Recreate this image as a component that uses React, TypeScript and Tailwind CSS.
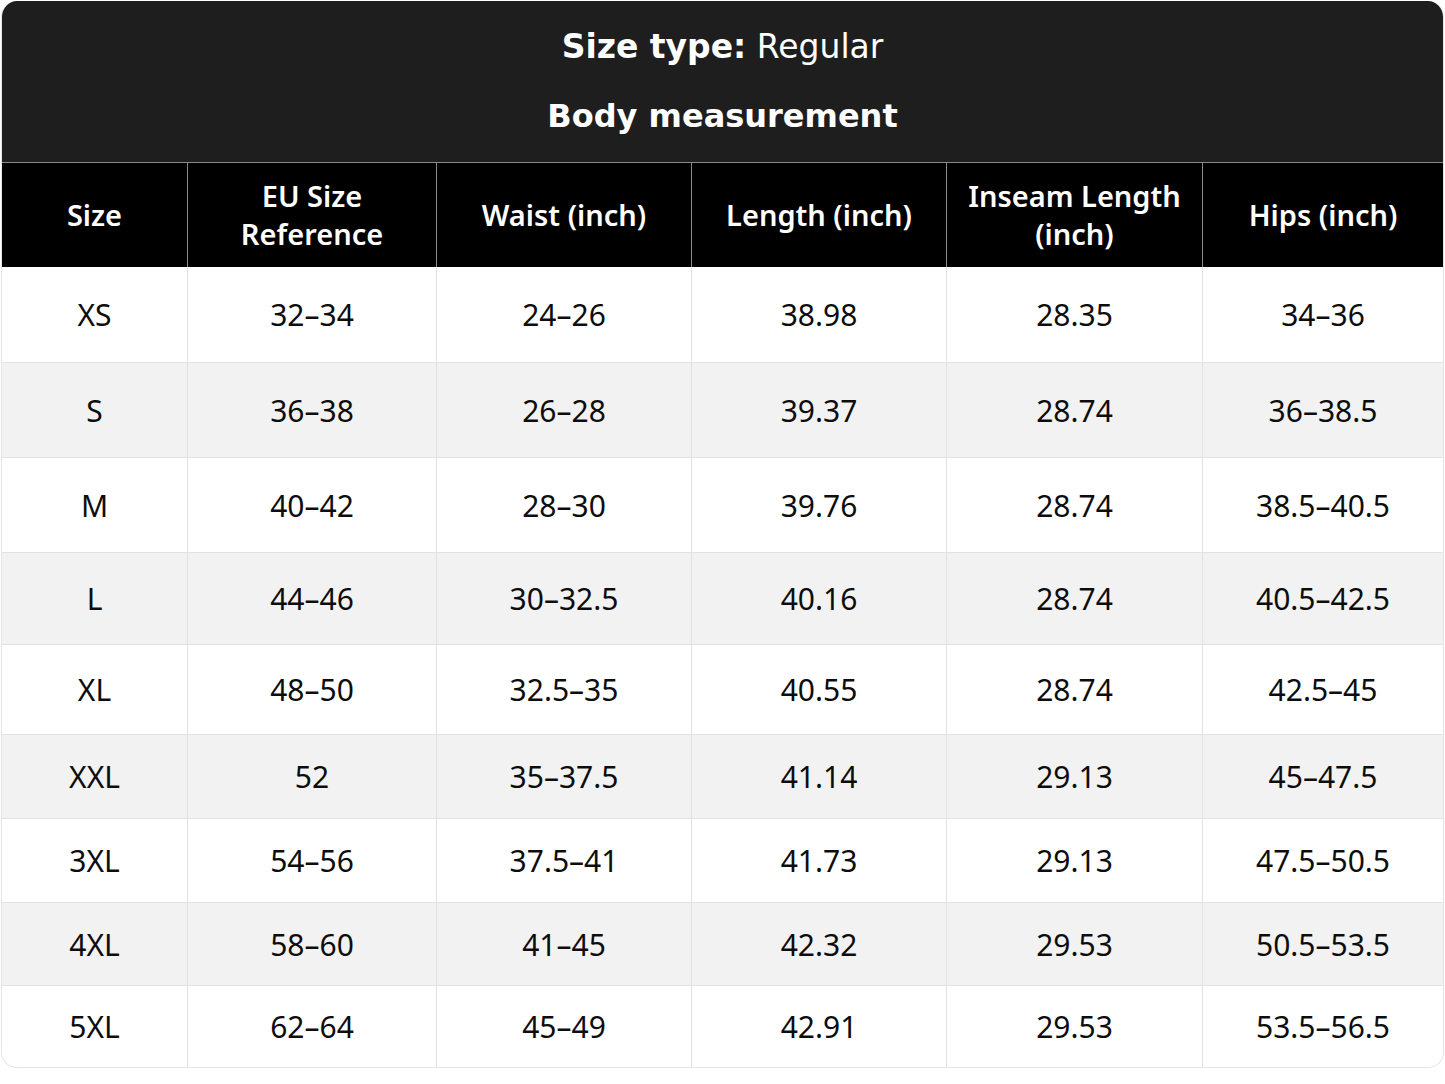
import React from 'react';

const cols = 'grid grid-cols-[185px_249px_255px_255px_256px_1fr]';

const headers = ['Size', 'EU Size\nReference', 'Waist (inch)', 'Length (inch)', 'Inseam Length\n(inch)', 'Hips (inch)'];

const rows: { h: string; cells: string[] }[] = [
  { h: 'h-[95px]', cells: ['XS', '32–34', '24–26', '38.98', '28.35', '34–36'] },
  { h: 'h-[95px]', cells: ['S', '36–38', '26–28', '39.37', '28.74', '36–38.5'] },
  { h: 'h-[95px]', cells: ['M', '40–42', '28–30', '39.76', '28.74', '38.5–40.5'] },
  { h: 'h-[92px]', cells: ['L', '44–46', '30–32.5', '40.16', '28.74', '40.5–42.5'] },
  { h: 'h-[90px]', cells: ['XL', '48–50', '32.5–35', '40.55', '28.74', '42.5–45'] },
  { h: 'h-[84px]', cells: ['XXL', '52', '35–37.5', '41.14', '29.13', '45–47.5'] },
  { h: 'h-[84px]', cells: ['3XL', '54–56', '37.5–41', '41.73', '29.13', '47.5–50.5'] },
  { h: 'h-[83px]', cells: ['4XL', '58–60', '41–45', '42.32', '29.53', '50.5–53.5'] },
  { h: 'h-[82px]', cells: ['5XL', '62–64', '45–49', '42.91', '29.53', '53.5–56.5'] },
];

export default function App() {
  return (
    <div className="w-[1445px] h-[1084px] bg-white p-[1px]">
      <div className="rounded-[16px] overflow-hidden border border-[#e4e4e4] border-t-0 w-[1443px]">
        <div className="bg-[#1e1e1e] h-[161px] flex flex-col items-center text-white font-['DejaVu_Sans',sans-serif] text-[33px] pt-[26px] gap-[31px] leading-[39px]">
          <div><span className="font-bold">Size type:</span> Regular</div>
          <div className="font-bold text-[32px]">Body measurement</div>
        </div>
        <div className="h-[1px] bg-[#8a8a8a]" />
        <div className={`${cols} bg-black h-[104px] text-white font-['Noto_Sans',sans-serif] font-semibold text-[29px] leading-[38px]`}>
          {headers.map((t, i) => (
            <div
              key={i}
              className={`flex items-center justify-center text-center whitespace-pre-line ${i > 0 ? 'border-l border-[#8a8a8a]' : ''}`}
            >
              {t}
            </div>
          ))}
        </div>
        {rows.map((r, ri) => (
          <div
            key={ri}
            className={`${cols} ${r.h} ${ri % 2 === 1 ? 'bg-[#f2f2f2]' : 'bg-white'} ${ri > 0 ? 'border-t border-[#e2e2e2]' : ''} text-[#0d0d0d] font-['Noto_Sans',sans-serif] text-[30px]`}
          >
            {r.cells.map((c, ci) => (
              <div key={ci} className={`flex items-center justify-center ${ci > 0 ? 'border-l border-[#e2e2e2]' : ''}`}>
                {c}
              </div>
            ))}
          </div>
        ))}
      </div>
    </div>
  );
}
